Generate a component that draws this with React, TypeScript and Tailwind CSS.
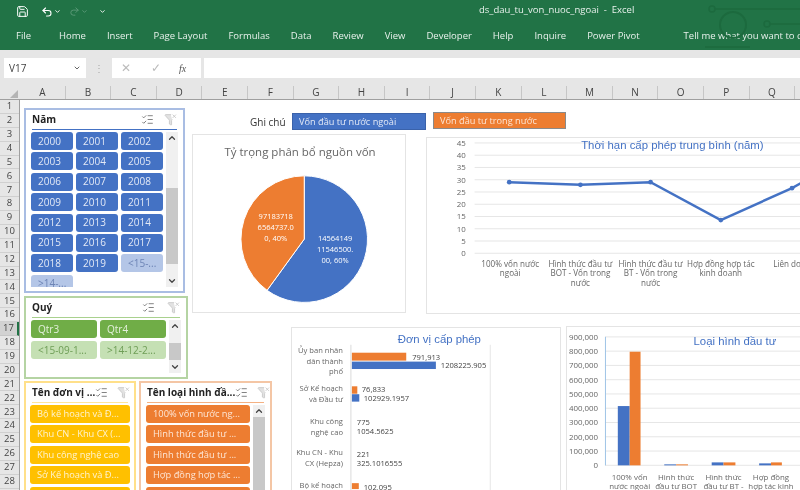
import { ChevronDown, ChevronUp, ListChecks, FilterX, Lightbulb, Save, Undo2, Redo2 } from "lucide-react";

const tabs = ["Home", "Insert", "Page Layout", "Formulas", "Data", "Review", "View", "Developer", "Help", "Inquire", "Power Pivot"];
const cols = "ABCDEFGHIJKLMNOPQ".split("");
const rows = Array.from({ length: 28 }, (_, i) => i + 1);
const years = ["2000", "2001", "2002", "2003", "2004", "2005", "2006", "2007", "2008", "2009", "2010", "2011", "2012", "2013", "2014", "2015", "2016", "2017", "2018", "2019"];

const font = "font-['Open_Sans',sans-serif]";

const Scroll = ({ thumb }: { thumb: string }) => (
  <div className="w-[12px] shrink-0 bg-[#f0f0f0] flex flex-col items-center justify-between relative">
    <ChevronUp className="w-[10px] h-[12px] text-[#444]" strokeWidth={3} />
    <div className={`absolute left-0 right-0 bg-[#c8c8c8] ${thumb}`} />
    <ChevronDown className="w-[10px] h-[12px] text-[#444]" strokeWidth={3} />
  </div>
);

const SlicerHead = ({ title, line, iconGap }: { title: string; line: string; iconGap: string }) => (
  <div className={`h-[20px] shrink-0 mx-[6px] border-b flex items-center justify-between ${line}`}>
    <span className="text-[10px] font-bold text-[#222] whitespace-nowrap">{title}</span>
    <div className={`flex items-center ${iconGap}`}>
      <ListChecks className="w-[13px] h-[13px] text-[#666]" strokeWidth={1.5} />
      <FilterX className="w-[13px] h-[13px] text-[#c4c4c4] fill-[#e2e2e2]" strokeWidth={1.5} />
    </div>
  </div>
);

const Btn = ({ children, className }: { children: React.ReactNode; className: string }) => (
  <div className={`h-[18px] shrink-0 rounded-[3px] flex items-center whitespace-nowrap overflow-hidden ${className}`}>{children}</div>
);

const Label = ({ x, y, children, anchor = "middle", size = 7.7, fill = "#666" }: { x: number; y: number; children: React.ReactNode; anchor?: "middle" | "end" | "start"; size?: number; fill?: string }) => (
  <text x={x} y={y} textAnchor={anchor} fontSize={size} fill={fill} fontFamily="Open Sans, sans-serif">{children}</text>
);

const PieChart = () => (
  <div className="absolute left-[192px] top-[134px] w-[214px] h-[179px] bg-white border border-[#e4e4e4]">
    <svg viewBox="192 134 214 179" className="w-full h-full">
      <Label x={300} y={155} size={11.6} fill="#666">Tỷ trọng phân bổ nguồn vốn</Label>
      <path d="M304.3 175.3 A64 64 0 1 1 266.7 291.1 L304.3 239.3 Z" fill="#4472c4" stroke="#fff" />
      <path d="M304.3 175.3 A64 64 0 0 0 266.7 291.1 L304.3 239.3 Z" fill="#ed7d31" stroke="#fff" />
      <Label x={275.5} y={219} fill="#fff" size={7.6}>97183718</Label>
      <Label x={275.5} y={230} fill="#fff" size={7.6}>6564737.0</Label>
      <Label x={275.5} y={241} fill="#fff" size={7.6}>0, 40%</Label>
      <Label x={335.5} y={241} fill="#fff" size={7.6}>14564149</Label>
      <Label x={335.5} y={252} fill="#fff" size={7.6}>11546500.</Label>
      <Label x={335.5} y={263} fill="#fff" size={7.6}>00, 60%</Label>
    </svg>
  </div>
);

const lineTicks = [45, 40, 35, 30, 25, 20, 15, 10, 5, 0];

const LineChart = () => (
  <div className="absolute left-[426px] top-[137px] w-[380px] h-[177px] bg-white border border-[#e4e4e4]">
    <svg viewBox="426 137 380 177" className="w-full h-full">
      {lineTicks.map((t, i) => (
        <g key={t}>
          <line x1={473} x2={806} y1={142 + i * 12.4} y2={142 + i * 12.4} stroke="#e6e6e6" />
          <Label x={464} y={145 + i * 12.4} anchor="end" size={8}>{t}</Label>
        </g>
      ))}
      <text x={673} y={148} textAnchor="middle" fontSize={11.5} fill="#4472c4" fontFamily="Liberation Sans, sans-serif">Thời hạn cấp phép trung bình (năm)</text>
      <polyline points="508,181.7 580,184.3 651,181.7 722,220 794,187.7 806,181" fill="none" stroke="#4472c4" strokeWidth={2.5} />
      {[[508, 181.7], [580, 184.3], [651, 181.7], [722, 220], [794, 187.7]].map(([x, y]) => (
        <circle key={x} cx={x} cy={y} r={2.4} fill="#4472c4" />
      ))}
      <Label x={509} y={267} size={8.2}>100% vốn nước</Label>
      <Label x={509} y={277} size={8.2}>ngoài</Label>
      <Label x={580} y={267} size={8.2}>Hình thức đầu tư</Label>
      <Label x={580} y={277} size={8.2}>BOT - Vốn trong</Label>
      <Label x={580} y={287} size={8.2}>nước</Label>
      <Label x={651} y={267} size={8.2}>Hình thức đầu tư</Label>
      <Label x={651} y={277} size={8.2}>BT - Vốn trong</Label>
      <Label x={651} y={287} size={8.2}>nước</Label>
      <Label x={722} y={267} size={8.2}>Hợp đồng hợp tác</Label>
      <Label x={722} y={277} size={8.2}>kinh doanh</Label>
      <Label x={775} y={267} anchor="start" size={8.2}>Liên doanh</Label>
    </svg>
  </div>
);

const UnitChart = () => (
  <div className="absolute left-[291px] top-[327px] w-[270px] h-[170px] bg-white border border-[#e4e4e4]">
    <svg viewBox="291 327 270 170" className="w-full h-full">
      <text x={439.5} y={342} textAnchor="middle" fontSize={11.5} fill="#4472c4" fontFamily="Liberation Sans, sans-serif">Đơn vị cấp phép</text>
      <line x1={350} x2={350} y1={344} y2={497} stroke="#d9d9d9" />
      <line x1={491} x2={491} y1={344} y2={497} stroke="#e6e6e6" />
      <Label x={342} y={352} anchor="end">Ủy ban nhân</Label>
      <Label x={342} y={363} anchor="end">dân thành</Label>
      <Label x={342} y={374} anchor="end">phố</Label>
      <rect x={351} y={352} width={55} height={8} fill="#ed7d31" />
      <rect x={351} y={361} width={85} height={7.5} fill="#4472c4" />
      <Label x={412} y={359} anchor="start" fill="#444">791,913</Label>
      <Label x={441} y={367} anchor="start" fill="#444">1208225.905</Label>
      <Label x={342} y={391} anchor="end">Sở Kế hoạch</Label>
      <Label x={342} y={402} anchor="end">và Đầu tư</Label>
      <rect x={351} y={386} width={5.5} height={7.5} fill="#ed7d31" />
      <rect x={351} y={394} width={7.5} height={7.5} fill="#4472c4" />
      <Label x={361} y={392} anchor="start" fill="#444">76,833</Label>
      <Label x={363} y={401} anchor="start" fill="#444">102929.1957</Label>
      <Label x={342} y={424} anchor="end">Khu công</Label>
      <Label x={342} y={435} anchor="end">nghệ cao</Label>
      <Label x={356} y={425} anchor="start" fill="#444">775</Label>
      <Label x={356} y={434} anchor="start" fill="#444">1054.5625</Label>
      <Label x={342} y={456} anchor="end">Khu CN - Khu</Label>
      <Label x={342} y={467} anchor="end">CX (Hepza)</Label>
      <Label x={356} y={458} anchor="start" fill="#444">221</Label>
      <Label x={356} y={467} anchor="start" fill="#444">325.1016555</Label>
      <Label x={342} y={489} anchor="end">Bộ kế hoạch</Label>
      <rect x={351} y={484} width={7} height={6} fill="#ed7d31" />
      <Label x={363} y={491} anchor="start" fill="#444">102,095</Label>
    </svg>
  </div>
);

const barTicks = ["900,000", "800,000", "700,000", "600,000", "500,000", "400,000", "300,000", "200,000", "100,000", "0"];

const TypeChart = () => (
  <div className="absolute left-[566px] top-[326px] w-[240px] h-[170px] bg-white border border-[#e4e4e4]">
    <svg viewBox="566 326 240 170" className="w-full h-full">
      {barTicks.map((t, i) => (
        <g key={t}>
          <line x1={604} x2={806} y1={336 + i * 14.44} y2={336 + i * 14.44} stroke="#e6e6e6" />
          <Label x={597} y={339 + i * 14.44} anchor="end" size={8}>{t}</Label>
        </g>
      ))}
      <line x1={604.5} x2={604.5} y1={336} y2={466} stroke="#9dc3e6" />
      <text x={735.5} y={344} textAnchor="middle" fontSize={11.5} fill="#4472c4" fontFamily="Liberation Sans, sans-serif">Loại hình đầu tư</text>
      <rect x={617} y={406} width={12} height={60} fill="#4472c4" />
      <rect x={629} y={351} width={11} height={115} fill="#ed7d31" />
      <rect x={664} y={465} width={12} height={1} fill="#4472c4" />
      <rect x={676} y={465} width={12} height={1} fill="#ed7d31" />
      <rect x={712} y={463} width={12} height={3} fill="#4472c4" />
      <rect x={724} y={463} width={12} height={3} fill="#ed7d31" />
      <rect x={760} y={464} width={12} height={2} fill="#4472c4" />
      <rect x={772} y={463} width={11} height={3} fill="#ed7d31" />
      <Label x={629} y={481} size={8}>100% vốn</Label>
      <Label x={629} y={490} size={8}>nước ngoài</Label>
      <Label x={676} y={481} size={8}>Hình thức</Label>
      <Label x={676} y={490} size={8}>đầu tư BOT</Label>
      <Label x={724} y={481} size={8}>Hình thức</Label>
      <Label x={724} y={490} size={8}>đầu tư BT -</Label>
      <Label x={772} y={481} size={8}>Hợp đồng</Label>
      <Label x={772} y={490} size={8}>hợp tác kinh</Label>
    </svg>
  </div>
);

export default function App() {
  return (
    <div className={`w-[800px] h-[490px] overflow-hidden relative bg-white flex flex-col blur-[0.35px] ${font}`}>
      {/* title bar and ribbon tabs */}
      <div className="h-[50px] bg-[#217346] text-[#e8f1ec] relative shrink-0">
        <div className="h-[23px] flex items-center pl-[16px]">
          <Save className="w-[13px] h-[13px] text-white" strokeWidth={1.8} />
          <Undo2 className="w-[12px] h-[12px] text-white ml-[12px]" strokeWidth={2.2} />
          <ChevronDown className="w-[7px] h-[7px] text-white ml-[1px]" strokeWidth={3} />
          <Redo2 className="w-[11px] h-[11px] text-[#5d9a79] ml-[8px]" strokeWidth={2} />
          <ChevronDown className="w-[7px] h-[7px] text-[#5d9a79] ml-[1px]" strokeWidth={3} />
          <ChevronDown className="w-[7px] h-[7px] text-white ml-[11px]" strokeWidth={3} />
          <span className="absolute left-[479px] top-[3px] text-[9.5px] whitespace-nowrap">ds_dau_tu_von_nuoc_ngoai&nbsp; - &nbsp;Excel</span>
        </div>
        <div className="flex items-center h-[27px] pb-[1px] pl-[16px] text-[9.5px] whitespace-nowrap">
          <span className="mr-[28px]">File</span>
          <div className="flex gap-[21px]">
            {tabs.map((t) => (
              <span key={t}>{t}</span>
            ))}
          </div>
          <Lightbulb className="w-[13px] h-[13px] ml-[33px] mr-[11px]" strokeWidth={1.5} />
          <span>Tell me what you want to do</span>
        </div>
        <svg viewBox="0 0 100 50" className="absolute right-0 top-0 w-[100px] h-[50px]" fill="none" stroke="#1c6a3e" strokeWidth={1.5}>
          <circle cx={12} cy={9} r={3} />
          <line x1={15} y1={9} x2={100} y2={9} />
          <circle cx={33} cy={25} r={13} strokeWidth={2} />
          <circle cx={67} cy={24} r={3} />
          <line x1={70} y1={24} x2={100} y2={24} />
          <line x1={5} y1={47} x2={50} y2={47} />
        </svg>
      </div>

      {/* formula bar */}
      <div className="h-[36px] bg-[#e6e6e6] flex items-center pl-[4px] shrink-0">
        <div className="w-[82px] h-[20px] bg-white flex items-center justify-between pl-[5px] pr-[5px] text-[10px] text-[#444]">
          V17
          <ChevronDown className="w-[8px] h-[8px] text-[#666]" strokeWidth={3} />
        </div>
        <div className="w-[26px] text-center text-[10px] text-[#aaa] leading-none">⋮</div>
        <div className="w-[89px] h-[20px] bg-white flex items-center pl-[9px] text-[#bbb]">
          <span className="text-[12px] w-[30px]">✕</span>
          <span className="text-[12px] w-[28px]">✓</span>
          <span className="text-[10px] text-[#555] italic font-['Liberation_Serif',serif]">fx</span>
        </div>
        <div className="flex-1 h-[20px] bg-white ml-[3px]" />
      </div>

      {/* column headers */}
      <div className="h-[14px] bg-[#e6e6e6] flex shrink-0 border-b border-[#9f9f9f] text-[10px] text-[#444]">
        <div className="w-[20px] shrink-0 flex items-end justify-end pr-[2px] pb-[1px]">
          <div className="w-0 h-0 border-l-[8px] border-l-transparent border-b-[8px] border-b-[#b4b4b4]" />
        </div>
        {cols.map((c) => (
          <div key={c} className="w-[45.6px] shrink-0 flex items-center justify-center border-r border-[#c6c6c6]">
            {c}
          </div>
        ))}
      </div>

      {/* sheet */}
      <div className="flex-1 flex min-h-0">
        <div className="w-[20px] shrink-0 bg-[#e6e6e6] border-r border-[#9f9f9f] text-[9.5px] text-[#444]">
          {rows.map((r) => (
            <div
              key={r}
              className={
                r === 17
                  ? "h-[13.88px] flex items-center justify-center bg-[#d2d2d2] border-r-2 border-r-[#217346] border-b border-[#c6c6c6]"
                  : "h-[13.88px] flex items-center justify-center border-b border-[#d0d0d0]"
              }
            >
              {r}
            </div>
          ))}
        </div>
      </div>

      {/* slicers and charts sit on the sheet canvas */}
      <div className="absolute left-[24px] top-[108px] w-[161px] h-[185px] border-2 border-[#a9bde3] bg-white flex flex-col">
        <SlicerHead title="Năm" line="border-[#4472c4]" iconGap="gap-[10px]" />
        <div className="flex flex-1 min-h-0 pl-[5px] pr-[5px] pt-[2px] pb-[4px] gap-[3px]">
          <div className="grid grid-cols-3 gap-x-[3px] gap-y-[2.4px] flex-1 overflow-hidden content-start text-[10px]">
            {years.map((y) => (
              <Btn key={y} className="bg-[#4472c4] text-[#e3e9f6] pl-[7px]">{y}</Btn>
            ))}
            <Btn className="bg-[#b4c6e7] text-[#6d84b5] pl-[7px]">{"<15-..."}</Btn>
            <Btn className="bg-[#b4c6e7] text-[#6d84b5] pl-[7px] rounded-b-none">{">14-..."}</Btn>
          </div>
          <Scroll thumb="top-[56px] h-[76px]" />
        </div>
      </div>

      <div className="absolute left-[24px] top-[296px] w-[164px] h-[83px] border-2 border-[#b5d4a3] bg-white flex flex-col">
        <SlicerHead title="Quý" line="border-[#a9d18e]" iconGap="gap-[12px]" />
        <div className="flex flex-1 min-h-0 pl-[5px] pr-[5px] pt-[2px] pb-[4px] gap-[3px]">
          <div className="grid grid-cols-2 gap-x-[3px] gap-y-[3px] flex-1 content-start text-[10px]">
            <Btn className="bg-[#70ad47] text-[#e4f0dc] pl-[7px]">Qtr3</Btn>
            <Btn className="bg-[#70ad47] text-[#e4f0dc] pl-[7px]">Qtr4</Btn>
            <Btn className="bg-[#c5e0b4] text-[#6f9e57] pl-[7px]">{"<15-09-1..."}</Btn>
            <Btn className="bg-[#c5e0b4] text-[#6f9e57] pl-[7px]">{">14-12-2..."}</Btn>
          </div>
          <Scroll thumb="top-[23px] h-[17px]" />
        </div>
      </div>

      <div className="absolute left-[24px] top-[381px] w-[112px] h-[130px] border-2 border-[#ffe08a] bg-white flex flex-col">
        <SlicerHead title="Tên đơn vị …" line="border-[#ffe699]" iconGap="gap-[9px]" />
        <div className="flex flex-col gap-[2.4px] px-[4px] pt-[2px] text-[9.3px]">
          {["Bộ kế hoạch và Đ...", "Khu CN - Khu CX (...", "Khu công nghệ cao", "Sở Kế hoạch và Đ...", ""].map((t, i) => (
            <Btn key={i} className="bg-[#ffc000] text-[#fff3cf] pl-[7px]">{t}</Btn>
          ))}
        </div>
      </div>

      <div className="absolute left-[139px] top-[381px] w-[133px] h-[130px] border-2 border-[#f4c6a5] bg-white flex flex-col">
        <SlicerHead title="Tên loại hình đầ..." line="border-[#f4b183]" iconGap="gap-[9px]" />
        <div className="flex flex-1 min-h-0 gap-[3px] pl-[5px] pr-[5px] pt-[2px] text-[9.3px]">
          <div className="flex flex-col gap-[2.4px] flex-1 min-w-0">
            {["100% vốn nước ng...", "Hình thức đầu tư ...", "Hình thức đầu tư ...", "Hợp đồng hợp tác ...", ""].map((t, i) => (
              <Btn key={i} className="bg-[#ed7d31] text-[#fde6d6] pl-[7px]">{t}</Btn>
            ))}
          </div>
          <Scroll thumb="top-[12px] bottom-0" />
        </div>
      </div>

      <div className="absolute left-[250px] top-[115px] text-[10px] text-[#333] whitespace-nowrap">Ghi chú</div>
      <div className="absolute left-[292px] top-[113px] w-[134px] h-[17px] bg-[#4472c4] border border-[#3a62aa] flex items-center pl-[6px] text-[9.2px] text-[#e3e9f6] whitespace-nowrap">Vốn đầu tư nước ngoài</div>
      <div className="absolute left-[433px] top-[112px] w-[133px] h-[17px] bg-[#ed7d31] border border-[#8a8a8a] flex items-center pl-[6px] text-[9.2px] text-[#fde6d6] whitespace-nowrap">Vốn đầu tư trong nước</div>

      <PieChart />
      <LineChart />
      <UnitChart />
      <TypeChart />
    </div>
  );
}
